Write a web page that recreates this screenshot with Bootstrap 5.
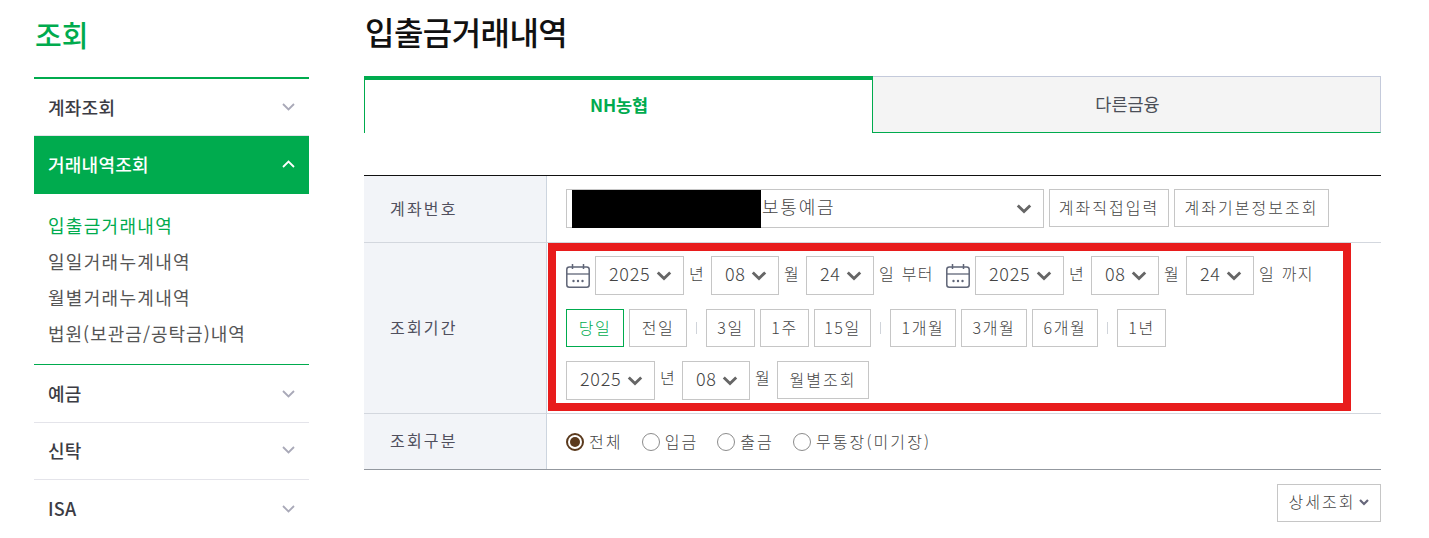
<!DOCTYPE html>
<html lang="ko">
<head>
<meta charset="utf-8">
<title>입출금거래내역</title>
<link href="https://cdn.jsdelivr.net/npm/bootstrap@5.3.0/dist/css/bootstrap.min.css" rel="stylesheet">
<style>
html,body{height:538px;overflow:hidden}
body{font-family:"Noto Sans CJK KR","Liberation Sans",sans-serif;color:#444;background:#fff}
.page-wrap{padding-left:34px;gap:55px}
.side{width:275px;flex:none}
.side-title{font-size:29px;font-weight:500;color:#00ab4e;line-height:34px;margin:17px 0 26px 1px}
.side-list{border-top:2px solid #00ab4e}
.side-head{height:57px;padding:0 14px;font-size:18px;font-weight:500;letter-spacing:.25px;color:#3c3c44;border-bottom:1px solid #e4e4ea}
.side-head.tall{height:58px}
.side-head.lift{padding-bottom:2px}
.side-head.on{background:#00ab4e;color:#fff;border-bottom:0;height:58px;padding-bottom:2px}
.side-head.plain{border-bottom:0}
.side-sub{padding:13px 14px 0;height:171px;border-bottom:1px solid #00ab4e}
.side-sub a{display:block;height:36px;line-height:36px;font-size:18px;letter-spacing:1.3px;color:#555;text-decoration:none}
.side-sub a.on{color:#00ab4e}
.side-sub a.snug{letter-spacing:1px}
.main-col{width:1017px;flex:none}
.page-title{font-size:32px;font-weight:500;color:#111;line-height:40px;margin:11px 0 25px 1px;letter-spacing:-.55px}
.tab-bar{height:57px}
.tab-bar .nav-item{flex:1 1 0}
.tab-bar .tab-on,.tab-bar .tab-off{display:flex;height:57px;align-items:center;justify-content:center;font-size:17.5px;text-decoration:none;padding:0}
.tab-bar .tab-on{width:509px;border-top:4px solid #00ab4e;border-left:1px solid #00ab4e;border-right:1px solid #00ab4e;color:#00ab4e;font-weight:700;letter-spacing:-.2px;padding:0 0 3px 1px}
.tab-bar .tab-off{width:508px;background:#f4f4f4;border-top:1px solid #c4cadb;border-right:1px solid #c4cadb;border-bottom:1px solid #00ab4e;color:#4b4f58;padding-left:2px}
.tab-bar .nav-item:first-child{flex:none;width:509px}
.form-table{margin-top:42px;border-top:1px solid #111;border-bottom:1px solid #93989f}
.form-line{border-bottom:1px solid #d3d7de}
.form-line:last-child{border-bottom:0}
.line-a{height:67px}
.line-b{height:171px}
.line-c{height:55px}
.form-th{width:183px;flex:none;background:#f2f4f8;border-right:1px solid #cdd5df;padding:0 0 3px 26px;font-size:16px;letter-spacing:2.2px;color:#50505e}
.form-td{flex:1;min-width:0}
.td-pad{padding:13px 0 0 19px;gap:5px}
.red-mark{border:8px solid #e81c1c;margin:0 30px 2px 1px;height:168px;width:803px;padding:5px 0 0 10px;gap:14px}
.ctl{height:39px;gap:5px}
.ctl-b{height:38px;gap:5px}
.sel{height:39px;border:1px solid #c6c6c6;border-radius:0;color:#444;font-size:18px;font-weight:300;letter-spacing:.7px;padding:0 0 4px 13px;background-color:#fff;background-image:url("data:image/svg+xml,%3Csvg xmlns='http://www.w3.org/2000/svg' viewBox='0 0 18 11'%3E%3Cpath d='M2 2l7 7 7-7' fill='none' stroke='%23666' stroke-width='3.2'/%3E%3C/svg%3E");background-size:16px 11px;background-position:right 11px center;background-repeat:no-repeat;flex:none}
.sel-y{width:89px}
.sel-m{width:68px}
.sel-acct{width:478px;padding-left:195px;font-size:18px;letter-spacing:1.8px}
.acct-box{width:478px;flex:none}
.redact{position:absolute;left:6px;top:1px;width:189px;height:38px;background:#000}
.lbl{font-size:16px;font-weight:300;letter-spacing:1.3px;color:#444;margin:0 0 6px 0;white-space:nowrap;line-height:1;width:17px;flex:none}
.lbl-end{width:62px;word-spacing:1px}
.lbl-last{width:auto;word-spacing:1px}
.bt{height:38px;border:1px solid #c6c6c6;border-radius:0;background:#fff;color:#444;font-size:16px;font-weight:300;letter-spacing:1.6px;padding:0 0 2px;flex:none;display:flex;align-items:center;justify-content:center}
.bt.picked{border-color:#00ab4e;color:#00ab4e}
.bt.wide{letter-spacing:2px}
.w58{width:58px}.w49{width:49px}.w57{width:57px}.w66{width:66px}.w92{width:92px}.w120{width:120px}.w155{width:155px}
.vsep{width:1px;height:12px;background:#d0d4da;margin:0 4px;flex:none}
.cal{width:24px;height:25px;flex:none}
.radio-row{padding-left:19px;font-size:16px;font-weight:300;letter-spacing:2.1px;color:#444}
.radio-row .form-check{padding:0;margin:0 19px 0 0;min-height:0;display:flex;align-items:center;gap:5px}
.radio-row .form-check-input{float:none;margin:0;width:18px;height:18px;border:1px solid #8c8c8c;flex:none}
.radio-row .form-check-input:checked{background-color:#fff;border:2px solid #5b3a1d;background-image:url("data:image/svg+xml,%3Csvg xmlns='http://www.w3.org/2000/svg' viewBox='0 0 14 14'%3E%3Ccircle cx='7' cy='7' r='5' fill='%235b3a1d'/%3E%3C/svg%3E");background-size:14px 14px}
.radio-row .form-check-label{line-height:1;padding-bottom:2px}
.more-wrap{margin-top:14px}
.more-btn{width:104px;gap:4px;padding-bottom:5px;letter-spacing:2px}
.more-btn svg{margin-top:4px}
</style>
</head>
<body>
<div class="d-flex page-wrap">
  <aside class="side">
    <div class="side-title">조회</div>
    <div class="side-list">
      <div class="side-head d-flex align-items-center justify-content-between">계좌조회
        <svg width="13" height="8" viewBox="0 0 13 8"><path d="M1 1l5.500 5.500L12 1" fill="none" stroke="#a9a9b8" stroke-width="1.800"/></svg></div>
      <div class="side-head on d-flex align-items-center justify-content-between">거래내역조회
        <svg width="13" height="8" viewBox="0 0 13 8"><path d="M1 7l5.500-5.500L12 7" fill="none" stroke="#fff" stroke-width="1.800"/></svg></div>
      <div class="side-sub">
        <a class="on" href="#">입출금거래내역</a>
        <a href="#">일일거래누계내역</a>
        <a href="#">월별거래누계내역</a>
        <a class="snug" href="#">법원(보관금/공탁금)내역</a>
      </div>
      <div class="side-head tall d-flex align-items-center justify-content-between">예금
        <svg width="13" height="8" viewBox="0 0 13 8"><path d="M1 1l5.500 5.500L12 1" fill="none" stroke="#a9a9b8" stroke-width="1.800"/></svg></div>
      <div class="side-head lift d-flex align-items-center justify-content-between">신탁
        <svg width="13" height="8" viewBox="0 0 13 8"><path d="M1 1l5.500 5.500L12 1" fill="none" stroke="#a9a9b8" stroke-width="1.800"/></svg></div>
      <div class="side-head plain d-flex align-items-center justify-content-between">ISA
        <svg width="13" height="8" viewBox="0 0 13 8"><path d="M1 1l5.500 5.500L12 1" fill="none" stroke="#a9a9b8" stroke-width="1.800"/></svg></div>
    </div>
  </aside>
  <main class="main-col">
    <h1 class="page-title">입출금거래내역</h1>
    <ul class="nav tab-bar flex-nowrap">
      <li class="nav-item"><a class="tab-on" href="#">NH농협</a></li>
      <li class="nav-item"><a class="tab-off" href="#">다른금융</a></li>
    </ul>
    <div class="form-table">
      <div class="form-line line-a d-flex">
        <div class="form-th d-flex align-items-center">계좌번호</div>
        <div class="form-td d-flex align-items-start td-pad">
          <div class="acct-box position-relative">
            <select class="form-select sel sel-acct"><option>보통예금</option></select>
            <div class="redact"></div>
          </div>
          <button class="btn bt wide w120" type="button">계좌직접입력</button>
          <button class="btn bt wide w155" type="button">계좌기본정보조회</button>
        </div>
      </div>
      <div class="form-line line-b d-flex">
        <div class="form-th d-flex align-items-center">조회기간</div>
        <div class="form-td">
          <div class="red-mark d-flex flex-column">
            <div class="ctl d-flex align-items-center">
              <svg class="cal" viewBox="0 0 24 25"><rect x=".8" y="4" width="22.400" height="20.200" rx="2.500" fill="#fff" stroke="#5f6577" stroke-width="1.500"/><path d="M6.500 1v5M17.500 1v5" stroke="#5f6577" stroke-width="1.500"/><path d="M1 11h22" stroke="#5f6577" stroke-width="1.300"/><circle cx="7.500" cy="18" r="1.200" fill="#5f6577"/><circle cx="12" cy="18" r="1.200" fill="#5f6577"/><circle cx="16.500" cy="18" r="1.200" fill="#5f6577"/></svg>
              <select class="form-select sel sel-y"><option>2025</option></select><span class="lbl">년</span>
              <select class="form-select sel sel-m"><option>08</option></select><span class="lbl">월</span>
              <select class="form-select sel sel-m"><option>24</option></select><span class="lbl lbl-end">일 부터</span>
              <svg class="cal" viewBox="0 0 24 25"><rect x=".8" y="4" width="22.400" height="20.200" rx="2.500" fill="#fff" stroke="#5f6577" stroke-width="1.500"/><path d="M6.500 1v5M17.500 1v5" stroke="#5f6577" stroke-width="1.500"/><path d="M1 11h22" stroke="#5f6577" stroke-width="1.300"/><circle cx="7.500" cy="18" r="1.200" fill="#5f6577"/><circle cx="12" cy="18" r="1.200" fill="#5f6577"/><circle cx="16.500" cy="18" r="1.200" fill="#5f6577"/></svg>
              <select class="form-select sel sel-y"><option>2025</option></select><span class="lbl">년</span>
              <select class="form-select sel sel-m"><option>08</option></select><span class="lbl">월</span>
              <select class="form-select sel sel-m"><option>24</option></select><span class="lbl lbl-last">일 까지</span>
            </div>
            <div class="ctl-b d-flex align-items-center">
              <button class="btn bt w58 picked" type="button">당일</button>
              <button class="btn bt w58" type="button">전일</button>
              <span class="vsep"></span>
              <button class="btn bt w49" type="button">3일</button>
              <button class="btn bt w49" type="button">1주</button>
              <button class="btn bt w57" type="button">15일</button>
              <span class="vsep"></span>
              <button class="btn bt w66" type="button">1개월</button>
              <button class="btn bt w66" type="button">3개월</button>
              <button class="btn bt w66" type="button">6개월</button>
              <span class="vsep"></span>
              <button class="btn bt w49" type="button">1년</button>
            </div>
            <div class="ctl-b d-flex align-items-center">
              <select class="form-select sel sel-y"><option>2025</option></select><span class="lbl">년</span>
              <select class="form-select sel sel-m"><option>08</option></select><span class="lbl">월</span>
              <button class="btn bt wide w92" type="button">월별조회</button>
            </div>
          </div>
        </div>
      </div>
      <div class="form-line line-c d-flex">
        <div class="form-th d-flex align-items-center">조회구분</div>
        <div class="form-td d-flex align-items-center radio-row">
          <div class="form-check"><input class="form-check-input" type="radio" name="kind" id="k1" checked><label class="form-check-label" for="k1">전체</label></div>
          <div class="form-check"><input class="form-check-input" type="radio" name="kind" id="k2"><label class="form-check-label" for="k2">입금</label></div>
          <div class="form-check"><input class="form-check-input" type="radio" name="kind" id="k3"><label class="form-check-label" for="k3">출금</label></div>
          <div class="form-check"><input class="form-check-input" type="radio" name="kind" id="k4"><label class="form-check-label" for="k4">무통장(미기장)</label></div>
        </div>
      </div>
    </div>
    <div class="d-flex justify-content-end more-wrap">
      <button class="btn bt more-btn" type="button">상세조회<svg width="10" height="7" viewBox="0 0 10 7"><path d="M1 1l4 4 4-4" fill="none" stroke="#66667a" stroke-width="2.200"/></svg></button>
    </div>
  </main>
</div>
<script src="https://cdn.jsdelivr.net/npm/bootstrap@5.3.0/dist/js/bootstrap.bundle.min.js"></script>
</body>
</html>
